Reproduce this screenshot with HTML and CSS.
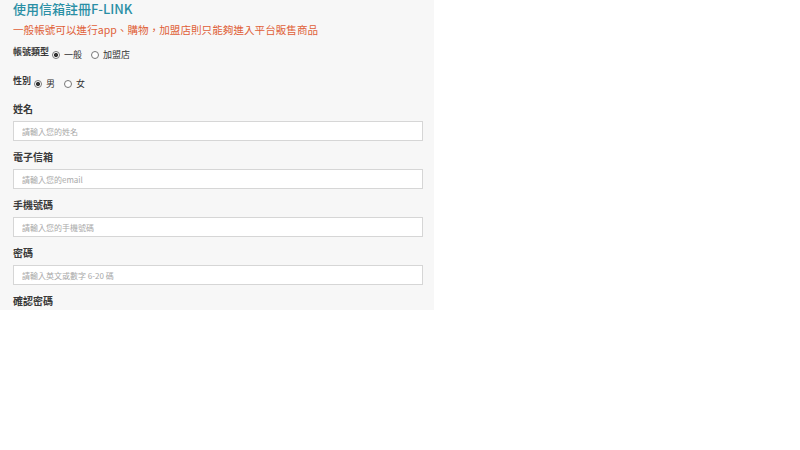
FILE: index.html
```html
<!DOCTYPE html>
<html lang="zh-Hant">
<head>
  <meta charset="UTF-8">
  <meta name="viewport" content="width=device-width, initial-scale=1.0">
  <title>使用信箱註冊F-LINK</title>
  <link rel="stylesheet" href="styles.css">
</head>
<body>
  <div class="panel">
    <h1 class="title">使用信箱註冊F-LINK</h1>
    <p class="notice">一般帳號可以進行app、購物，加盟店則只能夠進入平台販售商品</p>

    <!-- account type -->
    <div class="choice-row type-row">
      <span class="choice-label">帳號類型</span>
      <label class="choice"><input type="radio" name="type" checked> 一般</label>
      <label class="choice"><input type="radio" name="type"> 加盟店</label>
    </div>

    <!-- gender -->
    <div class="choice-row gender-row">
      <span class="choice-label">性別</span>
      <label class="choice"><input type="radio" name="gender" checked> 男</label>
      <label class="choice"><input type="radio" name="gender"> 女</label>
    </div>

    <div class="field">
      <label for="name">姓名</label>
      <input type="text" id="name" placeholder="請輸入您的姓名">
    </div>
    <div class="field">
      <label for="email">電子信箱</label>
      <input type="text" id="email" placeholder="請輸入您的email">
    </div>
    <div class="field">
      <label for="phone">手機號碼</label>
      <input type="text" id="phone" placeholder="請輸入您的手機號碼">
    </div>
    <div class="field">
      <label for="pwd">密碼</label>
      <input type="password" id="pwd" placeholder="請輸入英文或數字 6-20 碼">
    </div>
    <div class="field">
      <label for="pwd2">確認密碼</label>
      <input type="password" id="pwd2" placeholder="請再次輸入密碼">
    </div>
  </div>
</body>
</html>
```

FILE: styles.css
```css
body {
  margin: 0;
  background-color: #fff;
  font-family: "Noto Sans CJK TC", "Noto Sans", sans-serif;
  color: #333;
}

.panel {
  width: 434px;
  height: 310px;
  overflow: hidden;
  box-sizing: border-box;
  padding: 0 11px 0 13px;
  background-color: #f7f7f7; /* grey form area */
}

.title {
  margin: 0;
  font-size: 13px;
  line-height: 18px;
  font-weight: 500;
  color: #2a8fa5;
}

.notice {
  margin: 4px 0 0;
  font-size: 10.6px;
  line-height: 15px;
  color: #e05f38;
}

.choice-row {
  display: flex;
  align-items: flex-start;
  font-size: 9px;
}

.type-row {
  margin-top: 9px;
  height: 29px;
}

.gender-row {
  height: 27px;
}

.choice-label {
  font-weight: bold;
  line-height: 12px;
  margin-right: 3px;
  color: #3a3a3a;
}

.choice {
  display: flex;
  align-items: center;
  margin-top: 3px;
  margin-right: 9px;
  line-height: 12px;
}

.choice input {
  appearance: none;
  width: 8px;
  height: 8px;
  margin: 0 4px 0 0;
  border: 1px solid #777;
  border-radius: 50%;
  background: #fff;
  box-sizing: border-box;
}

.choice input:checked {
  background: radial-gradient(circle, #333 0 2px, #fff 2.2px);
}

.field {
  margin-bottom: 9px;
}

.field label {
  display: block;
  font-size: 10px;
  font-weight: bold;
  line-height: 14px;
  margin-bottom: 5px;
  color: #3a3a3a;
}

.field input {
  display: block;
  width: 100%;
  height: 20px;
  box-sizing: border-box;
  margin: 0;
  padding: 0 8px;
  border: 1px solid #d6d6d6;
  background: #fff;
  font-family: inherit;
  font-size: 8px;
  color: #555;
}

.field input::placeholder {
  color: #a8a8a8;
}
```
